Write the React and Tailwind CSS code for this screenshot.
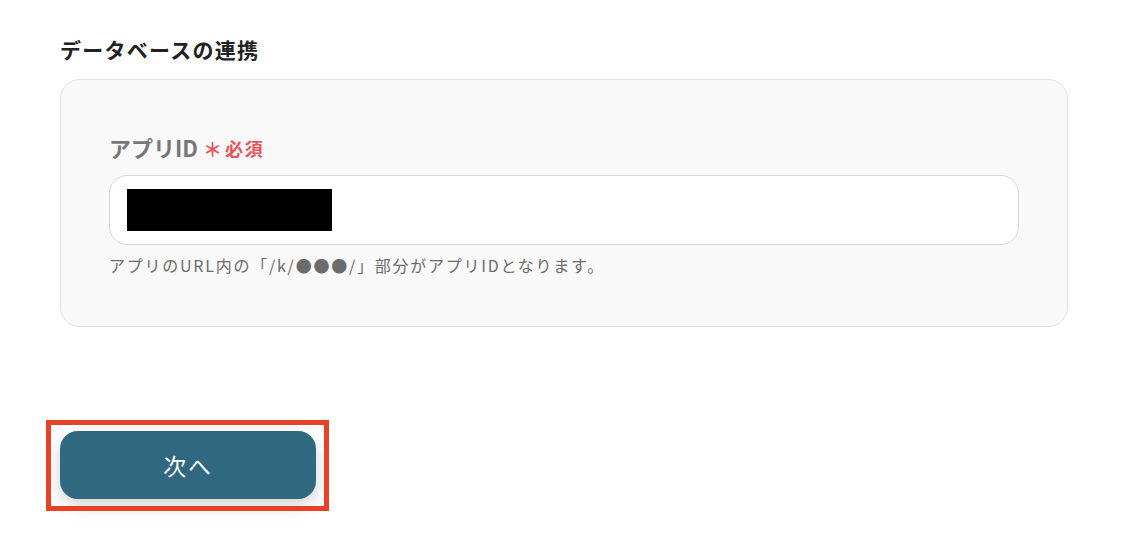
export default function App() {
  const jp = { fontFamily: '"Noto Sans CJK JP", "Noto Sans", sans-serif' };
  return (
    <div className="w-[1138px] h-[560px] bg-white" style={jp}>
      <div className="pl-[60px] pt-[32px] w-[1068px]">
        <h2 className="text-[21px] leading-[34px] font-bold text-[#222] tracking-[0.06em]">
          データベースの連携
        </h2>
        <div className="mt-[13px] h-[248px] rounded-[20px] border border-[#e3e3e3] bg-[#f9f9f9] px-[48px] pt-[47px]">
          <div className="flex items-end h-[36px]">
            <span className="text-[22px] leading-[32px] font-bold text-[#777]">アプリID</span>
            <span className="ml-[5px] text-[19px] leading-[30px] font-bold text-[#e8555d] translate-y-[1px]">＊</span>
            <span className="ml-[3px] text-[18px] leading-[30px] font-bold text-[#e8555d] tracking-[0.1em]">必須</span>
          </div>
          <div className="mt-[12px] h-[70px] rounded-[18px] border border-[#d4d8de] bg-white flex items-center pl-[17px]">
            <div className="w-[205px] h-[42px] bg-black" />
          </div>
          <p className="mt-[9px] text-[16px] leading-[22px] text-[#6b6b6b] tracking-[0.11em]">
            アプリのURL内の「/k/●●●/」部分がアプリIDとなります。
          </p>
        </div>
        <div className="relative mt-[104px] w-[256px] h-[68px]">
          <button className="w-[256px] h-[68px] rounded-[18px] bg-[#30687f] text-white text-[23px] tracking-[0.08em] shadow-[0_6px_18px_rgba(0,0,0,0.18)]">
            次へ
          </button>
          <div className="absolute left-[-14px] top-[-11px] w-[283px] h-[91px] border-[5px] border-[#e8412a] pointer-events-none" />
        </div>
      </div>
    </div>
  );
}
